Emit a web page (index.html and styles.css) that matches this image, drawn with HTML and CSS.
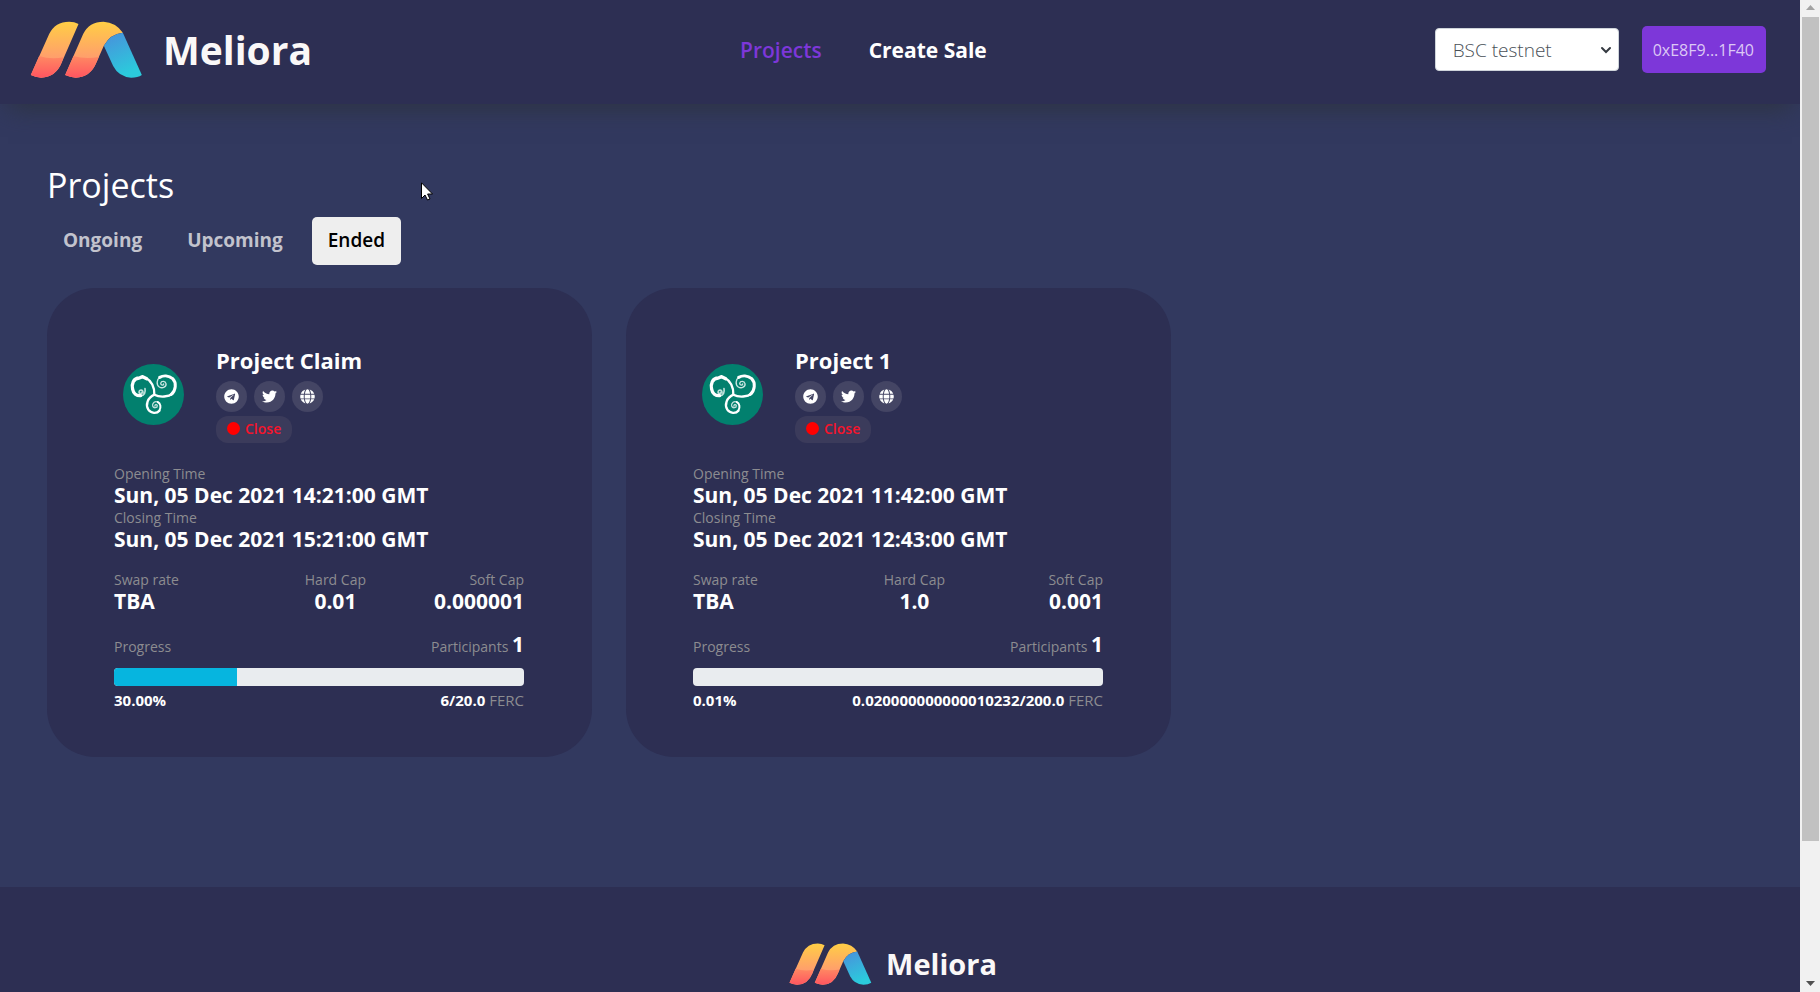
FILE: index.html
```html
<!DOCTYPE html>
<html lang="en">
<head>
<meta charset="utf-8">
<meta name="viewport" content="width=device-width, initial-scale=1">
<title>Meliora</title>
<link rel="stylesheet" href="styles.css">
</head>
<body>
<svg class="sprite" aria-hidden="true">
  <defs>
    <linearGradient id="warm" x1="0" y1="0" x2="0" y2="1">
      <stop offset="0" stop-color="#ffce45"/><stop offset="0.65" stop-color="#ff9e6c"/>
    </linearGradient>
    <linearGradient id="hot" gradientUnits="userSpaceOnUse" x1="0" y1="166" x2="0" y2="232">
      <stop offset="0" stop-color="#ff8a62"/><stop offset="1" stop-color="#ff5560"/>
    </linearGradient>
    <linearGradient id="cool" x1="0" y1="0" x2="0.4" y2="1">
      <stop offset="0" stop-color="#4a8edb"/><stop offset="1" stop-color="#2bcbdc"/>
    </linearGradient>
    <symbol id="mark" viewBox="92 62 336 171">
      <path fill="url(#warm)" d="M93 224L148 101Q166 64 208 64Q224 64 236 71L186 186Q168 231 124 232Q106 231 93 224Z"/>
      <path fill="url(#hot)" d="M93 224L118 167Q152 178 191 171L186 186Q168 231 124 232Q106 231 93 224Z"/>
      <path fill="url(#warm)" d="M196 224L250 101Q268 64 311 64Q348 66 369 97Q332 100 312 136L290 186Q272 231 228 232Q210 231 196 224Z"/>
      <path fill="url(#hot)" d="M196 224L221 167Q256 178 297 170L290 186Q272 231 228 232Q210 231 196 224Z"/>
      <path fill="url(#cool)" d="M312 136Q332 100 369 97L426 224Q414 232 394 232Q356 229 340 197Z"/>
    </symbol>
    <symbol id="telegram" viewBox="0 0 496 512"><path d="M248 8C111 8 0 119 0 256s111 248 248 248 248-111 248-248S385 8 248 8zm121.800 169.900l-40.700 191.800c-3 13.600-11.100 16.900-22.400 10.500l-62-45.700-29.900 28.800c-3.300 3.300-6.100 6.100-12.500 6.100l4.400-63.100 114.900-103.800c5-4.400-1.100-6.900-7.700-2.500l-142 89.400-61.200-19.100c-13.300-4.200-13.600-13.300 2.800-19.700l239.100-92.200c11.100-4 20.800 2.700 17.200 19.500z"/></symbol>
    <symbol id="twitter" viewBox="0 0 512 512"><path d="M459.370 151.716c.325 4.548.325 9.097.325 13.645 0 138.720-105.583 298.558-298.558 298.558-59.452 0-114.680-17.219-161.137-47.106 8.447.974 16.568 1.299 25.340 1.299 49.055 0 94.213-16.568 130.274-44.832-46.132-.975-84.792-31.188-98.112-72.772 6.498.974 12.995 1.624 19.818 1.624 9.421 0 18.843-1.300 27.614-3.573-48.081-9.747-84.143-51.980-84.143-102.985v-1.299c13.969 7.797 30.214 12.670 47.431 13.319-28.264-18.843-46.781-51.005-46.781-87.391 0-19.492 5.197-37.360 14.294-52.954 51.655 63.675 129.300 105.258 216.365 109.807-1.624-7.797-2.599-15.918-2.599-24.040 0-57.828 46.782-104.934 104.934-104.934 30.213 0 57.502 12.670 76.670 33.137 23.715-4.548 46.456-13.320 66.599-25.340-7.798 24.366-24.366 44.833-46.132 57.827 21.117-2.273 41.584-8.122 60.426-16.243-14.292 20.791-32.161 39.308-52.628 54.253z"/></symbol>
    <symbol id="globe" viewBox="0 0 496 512"><path d="M336.500 160C322 70.700 287.800 8 248 8s-74 62.700-88.500 152h177zM152 256c0 22.200 1.200 43.500 3.300 64h185.300c2.100-20.500 3.300-41.800 3.300-64s-1.200-43.500-3.300-64H155.300c-2.100 20.500-3.300 41.800-3.300 64zm324.700-96c-28.600-67.900-86.500-120.400-158-141.600 24.400 33.800 41.200 84.700 50 141.600h108zM177.200 18.400C105.800 39.600 47.800 92.100 19.300 160h108c8.700-56.900 25.500-107.800 49.900-141.600zM487.400 192H372.700c2.100 21 3.300 42.500 3.300 64s-1.200 43-3.300 64h114.600c5.500-20.500 8.600-41.800 8.600-64s-3.100-43.500-8.500-64zM120 256c0-21.500 1.200-43 3.300-64H8.600C3.200 212.500 0 233.800 0 256s3.200 43.500 8.600 64h114.600c-2-21-3.200-42.500-3.200-64zm39.500 96c14.500 89.300 48.700 152 88.500 152s74-62.700 88.500-152h-177zm159.300 141.600c71.400-21.200 129.400-73.700 158-141.600h-108c-8.800 56.900-25.600 107.800-50 141.600zM19.300 352c28.600 67.900 86.500 120.400 158 141.600-24.400-33.800-41.200-84.700-50-141.600h-108z"/></symbol>
    <symbol id="token" viewBox="39 42 183 183">
      <circle cx="130.500" cy="133.500" r="91.500" fill="#02806e"/>
      <g fill="none" stroke="#fff" stroke-linecap="round" stroke-linejoin="round">
        <path stroke-width="7" d="M133 134C134 112 124 92 108 84"/>
        <path stroke-width="10" d="M110 86L98 80L88 84C70 84 64 102 68 118C70 130 80 138 92 137"/>
        <path stroke-width="5" opacity=".75" d="M90 137C104 138 107 126 105 116M99 128C99 118 88 118 87 126C88 132 96 132 97 126"/>
        <path stroke-width="7" d="M133 134C150 143 176 141 188 130"/>
        <path stroke-width="9" d="M184 133C198 122 200 98 188 86C176 76 160 76 149 82"/>
        <path stroke-width="4" opacity=".8" d="M150 81C140 88 138 104 148 111C158 117 170 110 168 101C166 92 154 92 152 100C152 106 160 107 161 102"/>
        <path stroke-width="7" d="M133 134C112 144 106 164 115 179C123 191 141 191 148 182"/>
        <path stroke-width="6" d="M148 182C154 172 152 160 143 156"/>
        <path stroke-width="4" opacity=".75" d="M143 156C134 152 126 160 128 168C131 176 142 174 142 167C140 162 134 164 135 168"/>
      </g>
    </symbol>
  </defs>
</svg>

<div class="window">
  <div class="page">
    <header class="header">
      <a class="brand" href="#"><svg class="brand-mark"><use href="#mark"/></svg><span class="brand-name">Meliora</span></a>
      <nav class="nav">
        <a class="nav-link nav-link-active" href="#">Projects</a>
        <a class="nav-link" href="#">Create Sale</a>
      </nav>
      <div class="account">
        <div class="network">
          <select class="network-select" aria-label="Network"><option>BSC testnet</option></select>
          <svg class="network-arrow" viewBox="0 0 12 8"><path d="M2 2l4 4 4-4" fill="none" stroke="#343a40" stroke-width="2" stroke-linecap="round"/></svg>
        </div>
        <button class="wallet" type="button">0xE8F9...1F40</button>
      </div>
    </header>

    <main class="main">
      <h1 class="title">Projects</h1>
      <div class="tabs">
        <button class="tab" type="button">Ongoing</button>
        <button class="tab" type="button">Upcoming</button>
        <button class="tab tab-active" type="button">Ended</button>
      </div>

      <div class="cards">
        <article class="card">
          <div class="card-head">
            <svg class="token"><use href="#token"/></svg>
            <div class="identity">
              <h2 class="name">Project Claim</h2>
              <div class="socials">
                <a class="social" href="#" aria-label="Telegram"><svg class="social-icon"><use href="#telegram"/></svg></a>
                <a class="social" href="#" aria-label="Twitter"><svg class="social-icon"><use href="#twitter"/></svg></a>
                <a class="social" href="#" aria-label="Website"><svg class="social-icon"><use href="#globe"/></svg></a>
              </div>
              <span class="status"><i class="dot"></i>Close</span>
            </div>
          </div>
          <div class="times">
            <div class="label">Opening Time</div><div class="value">Sun, 05 Dec 2021 14:21:00 GMT</div>
            <div class="label">Closing Time</div><div class="value">Sun, 05 Dec 2021 15:21:00 GMT</div>
          </div>
          <div class="stats">
            <div><div class="label">Swap rate</div><div class="value">TBA</div></div>
            <div class="stat-center"><div class="label">Hard Cap</div><div class="value">0.01</div></div>
            <div class="stat-end"><div class="label">Soft Cap</div><div class="value">0.000001</div></div>
          </div>
          <div class="progress-head"><span class="label">Progress</span><span class="label">Participants <b class="value">1</b></span></div>
          <div class="bar" role="progressbar" aria-label="Progress" aria-valuenow="30"><div class="bar-fill" style="width:30%"></div></div>
          <div class="progress-foot"><b>30.00%</b><span><b>6/20.0</b> <span class="unit">FERC</span></span></div>
        </article>

        <article class="card">
          <div class="card-head">
            <svg class="token"><use href="#token"/></svg>
            <div class="identity">
              <h2 class="name">Project 1</h2>
              <div class="socials">
                <a class="social" href="#" aria-label="Telegram"><svg class="social-icon"><use href="#telegram"/></svg></a>
                <a class="social" href="#" aria-label="Twitter"><svg class="social-icon"><use href="#twitter"/></svg></a>
                <a class="social" href="#" aria-label="Website"><svg class="social-icon"><use href="#globe"/></svg></a>
              </div>
              <span class="status"><i class="dot"></i>Close</span>
            </div>
          </div>
          <div class="times">
            <div class="label">Opening Time</div><div class="value">Sun, 05 Dec 2021 11:42:00 GMT</div>
            <div class="label">Closing Time</div><div class="value">Sun, 05 Dec 2021 12:43:00 GMT</div>
          </div>
          <div class="stats">
            <div><div class="label">Swap rate</div><div class="value">TBA</div></div>
            <div class="stat-center"><div class="label">Hard Cap</div><div class="value">1.0</div></div>
            <div class="stat-end"><div class="label">Soft Cap</div><div class="value">0.001</div></div>
          </div>
          <div class="progress-head"><span class="label">Progress</span><span class="label">Participants <b class="value">1</b></span></div>
          <div class="bar" role="progressbar" aria-label="Progress" aria-valuenow="0"><div class="bar-fill" style="width:0.01%"></div></div>
          <div class="progress-foot"><b>0.01%</b><span><b>0.020000000000010232/200.0</b> <span class="unit">FERC</span></span></div>
        </article>
      </div>
    </main>

    <footer class="footer">
      <a class="brand brand-small" href="#"><svg class="brand-mark"><use href="#mark"/></svg><span class="brand-name">Meliora</span></a>
    </footer>
  </div>

  <div class="scrollbar" aria-hidden="true">
    <svg class="scroll-arrow" viewBox="0 0 17 17"><path d="M4 10h9L8.500 5z" fill="#a3a3a3"/></svg>
    <div class="scroll-track"><div class="scroll-thumb"></div></div>
    <svg class="scroll-arrow" viewBox="0 0 17 17"><path d="M4 6h9l-4.500 5z" fill="#505050"/></svg>
  </div>
</div>

<svg class="pointer" viewBox="0 0 12 19" aria-hidden="true"><path d="M.5.800V16.500L4 13l2.500 5 2.500-1-2.400-5h4.900z" fill="#fff" stroke="#000"/></svg>
</body>
</html>
```
FILE: styles.css
```css
* { box-sizing: border-box; }

body {
  margin: 0;
  background: #32395f;
  color: #fff;
  font-family: "Open Sans", "Noto Sans", sans-serif;
}

h1, h2 { margin: 0; }
a { color: inherit; text-decoration: none; }
button, select { font-family: inherit; }

.sprite { position: absolute; width: 0; height: 0; }

.window {
  display: grid;
  grid-template-columns: minmax(0, 1fr) 20px;
  height: 100vh;
}

.page {
  overflow-y: auto;
  scrollbar-width: none;
}

.header {
  position: relative;
  display: flex;
  align-items: center;
  justify-content: space-between;
  padding: 21px 34px 26px 30px;
  background: #2d2f53;
  box-shadow: 0 12px 24px -8px #2d3340;
}

.brand { display: flex; align-items: center; gap: 20px; }
.brand-mark { width: 113px; height: 57px; }
.brand-name { color: #faf8f8; font-size: 39px; font-weight: 700; line-height: 57px; }

.nav { display: flex; gap: 47px; margin-right: 20px; font-size: 21px; line-height: 30px; }
.nav-link { font-weight: 700; }
.nav-link-active { color: #7d37d9; font-weight: 600; }

.account { display: flex; align-items: center; gap: 23px; }
.network { position: relative; }
.network-select {
  width: 184px;
  height: 43px;
  padding: 0 17px;
  border: 1px solid #ced4da;
  border-radius: 4px;
  background: #fff;
  color: #495057;
  font-size: 19px;
  font-weight: 300;
  appearance: none;
}
.network-arrow { position: absolute; top: 18px; right: 7px; width: 12px; height: 8px; }
.wallet {
  height: 47px;
  padding: 0 12px 0 11px;
  border: 0;
  border-radius: 5px;
  background: #7d37d9;
  color: #dcc8f5;
  font-size: 16px;
}

.main { padding: 59px 50px 130px 47px; }
.title { font-size: 34px; font-weight: 400; line-height: 44px; }

.tabs { display: flex; gap: 13px; margin: 10px 0 23px; }
.tab {
  height: 48px;
  padding: 0 16px 2px;
  border: 0;
  border-radius: 5px;
  background: none;
  color: #c2c3cd;
  font-size: 19px;
  font-weight: 700;
}
.tab-active { background: #eee; color: #000; font-weight: 600; }

.cards { display: grid; grid-template-columns: repeat(3, minmax(0, 1fr)); gap: 34px; }
.card {
  padding: 58px 68px 47px 67px;
  border-radius: 48px;
  background: #2d2f53;
}

.card-head { display: flex; align-items: center; gap: 32px; padding-left: 9px; }
.token { width: 61px; height: 61px; }
.name { font-size: 22px; font-weight: 700; line-height: 28px; }
.socials { display: flex; gap: 7px; margin: 7px 0 4px; }
.social {
  display: grid;
  place-items: center;
  width: 31px;
  height: 31px;
  border-radius: 50%;
  background: #444564;
}
.social-icon { width: 15px; height: 15px; fill: #fff; }
.status {
  display: inline-flex;
  align-items: center;
  gap: 5px;
  height: 27px;
  padding: 0 11px 2px;
  border-radius: 12px;
  background: #3b3b5b;
  color: #f5142b;
  font-size: 14px;
  font-weight: 600;
  vertical-align: top;
}
.dot { width: 13px; height: 13px; border-radius: 50%; background: #f00; }

.label { color: #8c8c90; font-size: 14px; line-height: 19px; }
.value { color: #fff; font-size: 21px; font-weight: 700; line-height: 25px; }

.times { margin: 21px 0 18px; }
.stats { display: grid; grid-template-columns: 39fr 30fr 31fr; }
.stat-center { text-align: center; }
.stat-end { text-align: right; }

.progress-head {
  display: flex;
  align-items: baseline;
  justify-content: space-between;
  margin: 18px 0 11px;
}
.bar { height: 18px; overflow: hidden; border-radius: 4px; background: #e9ecef; }
.bar-fill { height: 100%; background: #06b5df; }
.progress-foot {
  display: flex;
  justify-content: space-between;
  margin-top: 4px;
  font-size: 15px;
  line-height: 20px;
}
.unit { color: #8c8c90; font-weight: 400; }

.footer {
  display: flex;
  justify-content: center;
  padding: 56px 14px 168px 0;
  background: #2d2f53;
}
.brand-small { gap: 14px; }
.brand-small .brand-mark { width: 83px; height: 42px; }
.brand-small .brand-name { font-size: 29px; line-height: 42px; }

.scrollbar { display: flex; flex-direction: column; background: #f1f1f1; }
.scroll-arrow { width: 17px; height: 17px; margin-left: 2px; }
.scroll-track { flex: 1; }
.scroll-thumb { height: 86%; margin: 0 1px 0 2px; background: #c1c1c1; }

.pointer { position: absolute; top: 182px; left: 421px; width: 12px; height: 19px; }
```
